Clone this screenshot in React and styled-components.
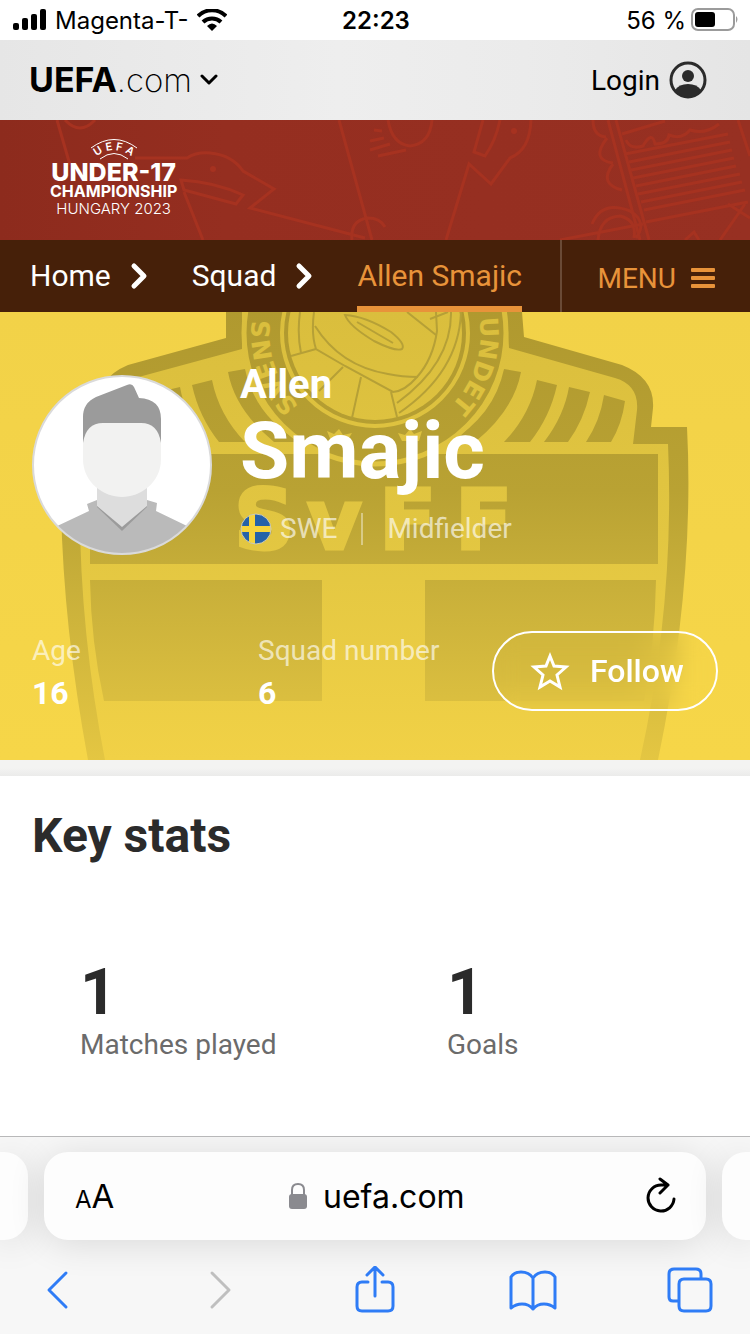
import React from "react";
import styled, { createGlobalStyle } from 'styled-components';

const GlobalStyle = createGlobalStyle`
  * {
    box-sizing: border-box;
  }

  body {
    margin: 0;
    background: #fff;
    font-family: Roboto, "Liberation Sans", sans-serif;
  }

  button {
    padding: 0;
    border: none;
    background: none;
    color: inherit;
    font: inherit;
    cursor: pointer;
  }

  svg {
    display: block;
    flex-shrink: 0;
  }
`;

const Screen = styled.div`
  display: flex;
  flex-direction: column;
  min-height: 100vh;
`;

const StatusBar = styled.div`
  display: grid;
  grid-template-columns: 1fr auto 1fr;
  align-items: center;
  height: 40px;
  padding: 0 11px 0 13px;
  font-family: Inter, sans-serif;
  font-size: 24px;
  line-height: 28px;
  color: #000;
`;

const StatusGroup = styled.div`
  display: flex;
  align-items: center;
  justify-content: ${(props) => props.$end ? "flex-end" : "flex-start"};
  gap: ${(props) => props.$end ? "5px" : "8px"};
`;

const StatusText = styled.span`
  padding-top: 2px;
`;

const Clock = styled.time`
  padding-top: 2px;
  font-weight: 600;
`;

const SiteHeader = styled.header`
  display: flex;
  align-items: center;
  justify-content: space-between;
  height: 80px;
  padding: 0 43px 0 29px;
  background: linear-gradient(90deg, #e6e6e6, #eeeeee 45%, #ebebeb 70%, #e5e5e5);
`;

const SiteButton = styled.button`
  display: flex;
  align-items: center;
  gap: 8px;
  font-family: Inter, sans-serif;
  font-size: 33px;
  line-height: 40px;
  font-weight: 200;
  color: #000;
`;

const SiteName = styled.span`
  b {
    font-size: 34px;
    font-weight: 700;
  }
`;

const LoginButton = styled.button`
  display: flex;
  align-items: center;
  gap: 9px;
  font-size: 28px;
  line-height: 32px;
  color: #000;
`;

const LoginText = styled.span`
  padding-top: 2px;
`;

const Banner = styled.div`
  display: grid;
  height: 120px;
  overflow: hidden;
  background: linear-gradient(90deg, #8d2b1d, #952e20 30%, #973022);
`;

const BannerPattern = styled.svg`
  grid-area: 1 / 1;
  width: 100%;
  height: 120px;
`;

const TournamentLogo = styled.a`
  grid-area: 1 / 1;
  justify-self: start;
  align-self: center;
  display: flex;
  flex-direction: column;
  align-items: center;
  margin-left: 50px;
  padding-bottom: 2px;
  font-family: Inter, sans-serif;
  color: #fff;
  text-decoration: none;
`;

const LogoTitle = styled.span`
  font-size: 25px;
  line-height: 21px;
  font-weight: 800;
`;

const LogoSubtitle = styled.span`
  font-size: 16px;
  line-height: 16px;
  font-weight: 700;
`;

const LogoPlace = styled.span`
  font-size: 15px;
  line-height: 20px;
  font-weight: 300;
`;

const Nav = styled.nav`
  display: flex;
  height: 72px;
  background: #462009;
`;

const Crumbs = styled.div`
  display: flex;
  flex: 1;
  padding-left: 30px;
`;

const Crumb = styled.a`
  display: flex;
  align-items: center;
  height: 72px;
  border-bottom: 6px solid ${(props) => props.$active ? "#e8933a" : "transparent"};
  padding-top: 6px;
  font-size: 30px;
  line-height: 36px;
  color: ${(props) => props.$active ? "#e8933a" : "#fff"};
  text-decoration: none;
`;

const CrumbArrow = styled.svg`
  align-self: center;
  margin: 0 44px 0 19px;
`;

const MenuButton = styled.button`
  display: flex;
  align-items: center;
  gap: 15px;
  padding: 4px 35px 0 36px;
  border-left: 2px solid #6a4a36;
  font-size: 28px;
  line-height: 32px;
  color: #e8933a;
`;

const MenuText = styled.span`
  padding-top: 2px;
`;

const Hero = styled.section`
  display: grid;
  overflow: hidden;
  background: linear-gradient(180deg, #f2d248, #f6d648);
  color: #fff;
`;

const Crest = styled.svg`
  grid-area: 1 / 1;
  width: 100%;
  height: 448px;
`;

const HeroContent = styled.div`
  grid-area: 1 / 1;
  padding: 49px 32px;
  z-index: 1;
`;

const Profile = styled.div`
  display: flex;
  gap: 28px;
`;

const Avatar = styled.div`
  width: 180px;
  height: 180px;
  margin-top: 14px;
`;

const PlayerName = styled.h1`
  display: flex;
  flex-direction: column;
  margin: 0;
  font-size: 80px;
  line-height: 84px;
  font-weight: 700;
`;

const FirstName = styled.span`
  font-size: 40px;
  line-height: 48px;
`;

const PlayerMeta = styled.div`
  display: flex;
  align-items: center;
  margin-top: 20px;
  font-size: 28px;
  line-height: 32px;
`;

const MetaText = styled.span`
  padding-left: ${(props) => props.$role ? "24px" : "8px"};
  margin-left: ${(props) => props.$role ? "24px" : "0"};
  border-left: ${(props) => props.$role ? "2px solid rgba(255, 255, 255, 0.4)" : "none"};
  color: rgba(255, 255, 255, 0.65);
`;

const HeroFooter = styled.div`
  display: flex;
  align-items: center;
  margin: 76px 0 -1px 0;
`;

const Details = styled.dl`
  display: flex;
  flex: 1;
  margin: 0;
  padding-top: 2px;
`;

const Detail = styled.div`
  flex: 1;
  white-space: nowrap;

  dt {
    font-size: 28px;
    line-height: 32px;
    color: rgba(255, 255, 255, 0.65);
  }

  dd {
    margin: 10px 0 0 0;
    font-size: 32px;
    line-height: 32px;
    font-weight: 700;
  }
`;

const FollowButton = styled.button`
  display: flex;
  align-items: center;
  gap: 20px;
  width: 226px;
  height: 80px;
  margin-left: 8px;
  padding-left: 36px;
  border: 2px solid #fff;
  border-radius: 40px;
  backdrop-filter: blur(12px);
  font-size: 32px;
  line-height: 40px;
  font-weight: 500;
`;

const Divider = styled.div`
  height: 16px;
  background: linear-gradient(180deg, #f3f3f2 50%, #ebebea);
`;

const StatsSection = styled.section`
  flex: 1;
  padding-top: 32px;
  color: #2b2b2b;
`;

const SectionTitle = styled.h2`
  margin: 0 32px;
  font-size: 48px;
  line-height: 56px;
  font-weight: 700;
`;

const StatsGrid = styled.div`
  display: grid;
  grid-template-columns: 1fr 1fr;
  margin: 97px 0 0 16px;
`;

const Stat = styled.div`
  display: flex;
  flex-direction: column;
  gap: 4px;
  padding-left: 64px;
`;

const StatValue = styled.strong`
  font-size: 64px;
  line-height: 64px;
  font-weight: 700;
`;

const StatLabel = styled.span`
  font-size: 28px;
  line-height: 32px;
  color: #6b6b6b;
`;

const BrowserBar = styled.footer`
  overflow: hidden;
  border-top: 1px solid #b8b8b9;
  padding-top: 15px;
  background: #f7f7f7;
`;

const Tabs = styled.div`
  display: flex;
  gap: 16px;
`;

const TabEdge = styled.div`
  width: 28px;
  height: 88px;
  border-radius: ${(props) => props.$right ? "24px 0 0 24px" : "0 24px 24px 0"};
  background: #fdfdfd;
  box-shadow: 0 4px 36px rgba(0, 0, 0, 0.12);
`;

const AddressBar = styled.div`
  display: grid;
  grid-template-columns: 1fr auto 1fr;
  align-items: center;
  flex: 1;
  height: 88px;
  padding: 0 29px 0 31px;
  border-radius: 24px;
  background: #fdfdfd;
  box-shadow: 0 4px 36px rgba(0, 0, 0, 0.12);
  font-family: Inter, sans-serif;
  color: #000;
`;

const TextSizeButton = styled.button`
  justify-self: start;
  padding-top: 4px;
  font-size: 33px;
  line-height: 40px;

  small {
    font-size: 24px;
  }
`;

const Address = styled.label`
  display: flex;
  align-items: center;
  gap: 15px;
`;

const AddressInput = styled.input`
  width: 141px;
  padding: 2px 0 0 0;
  border: none;
  outline: none;
  background: none;
  color: #000;
  font-family: Inter, sans-serif;
  font-size: 32px;
  line-height: 40px;
`;

const ReloadButton = styled.button`
  justify-self: end;
`;

const Toolbar = styled.div`
  display: flex;
  justify-content: space-between;
  padding: 26px 35px 20px 35px;
`;

const ToolButton = styled.button`
  color: ${(props) => props.disabled ? "#bfbfbf" : "#2f7cf6"};

  svg {
    fill: none;
    stroke: currentColor;
    stroke-width: 3;
    stroke-linecap: round;
    stroke-linejoin: round;
  }
`;

const stats = [
  { value: "1", label: "Matches played" },
  { value: "1", label: "Goals" }
];

const tools = [
  { name: "Back", d: "M31 7 L14 24 L31 41" },
  { name: "Forward", d: "M19 7 L36 24 L19 41", disabled: true },
  { name: "Share", d: "M17 16 H11 Q6 16 6 21 V40 Q6 45 11 45 H37 Q42 45 42 40 V21 Q42 16 37 16 H31 M24 30 V2 M16 9 L24 1 L32 9" },
  { name: "Bookmarks", d: "M24 12 Q20 6 12 6 Q5 6 2 11 V42 Q7 38 13 38 Q20 38 24 43 Q28 38 35 38 Q41 38 46 42 V11 Q43 6 36 6 Q28 6 24 12 V43" },
  { name: "Tabs", d: "M11 35 H6 Q2 35 2 31 V8 Q2 3 7 3 H29 Q34 3 34 8 V13 M17 13 H39 Q44 13 44 18 V40 Q44 45 39 45 H17 Q12 45 12 40 V18 Q12 13 17 13 Z" }
];

const SignalIcon = () => (
  <svg width="34" height="22" viewBox="0 0 34 22">
    <rect x="0" y="14" width="6" height="7" rx="2" />
    <rect x="9" y="9" width="6" height="12" rx="2" />
    <rect x="18" y="5" width="6" height="16" rx="2" />
    <rect x="27" y="0" width="6" height="21" rx="2" />
  </svg>
);

const WifiIcon = () => (
  <svg width="30" height="22" viewBox="0 0 30 22">
    <path d="M1 7 A20 20 0 0 1 29 7" fill="none" stroke="#000" strokeWidth="4" />
    <path d="M6 13 A13 13 0 0 1 24 13" fill="none" stroke="#000" strokeWidth="4" />
    <path d="M15 22 L10 17 Q15 12 20 17 Z" />
  </svg>
);

const BatteryIcon = () => (
  <svg width="48" height="24" viewBox="0 0 48 24">
    <rect x="1" y="1" width="42" height="21" rx="6" fill="#fff" stroke="#9b9b9b" strokeWidth="2" />
    <rect x="4" y="4" width="20" height="15" rx="3" />
    <path d="M45 8 Q48 11 45 15 Z" fill="#9b9b9b" />
  </svg>
);

const UserIcon = () => (
  <svg width="38" height="38" viewBox="0 0 38 38">
    <circle cx="19" cy="19" r="17" fill="none" stroke="#2b2b2b" strokeWidth="3" />
    <circle cx="19" cy="15" r="6" fill="#2b2b2b" />
    <path d="M6 29 Q10 23 19 23 Q28 23 32 29 Q27 36 19 36 Q11 36 6 29 Z" fill="#2b2b2b" />
  </svg>
);

const LogoArc = () => (
  <svg width="48" height="23" viewBox="0 0 48 23">
    <defs>
      <path id="logoArc" d="M4 20 A27 27 0 0 1 44 20" />
    </defs>
    <path d="M1 9 Q24 -8 47 9" fill="none" stroke="#fff" strokeWidth="1" />
    <path d="M10 20 Q24 9 38 20" fill="none" stroke="#fff" strokeWidth="1" />
    <text fill="#fff" fontSize="11" fontWeight="600" textAnchor="middle">
      <textPath href="#logoArc" startOffset="50%">U E F A</textPath>
    </text>
  </svg>
);

const AvatarPicture = () => (
  <svg width="180" height="180" viewBox="0 0 180 180" role="img" aria-label="Allen Smajic">
    <defs>
      <clipPath id="avatarClip"><circle cx="90" cy="90" r="89" /></clipPath>
    </defs>
    <circle cx="90" cy="90" r="89" fill="#fff" />
    <g clipPath="url(#avatarClip)">
      <path d="M0 163 L57 136 L55 129 L65 125 H115 L125 128 L124 136 L180 163 V180 H0 Z" fill="#bababa" />
      <path d="M65 112 V132 L90 156 L115 132 V112 Z" fill="#9b9b9b" />
      <path d="M65 105 V131 L90 152 L115 131 V105 Z" fill="#dddddd" />
      <path d="M51 70 V42 Q51 28 64 22 L95 10 Q100 8 102 12 L107 23 Q129 24 129 44 V70 Z" fill="#9b9b9b" />
      <path d="M51 68 Q54 48 71 48 H109 Q126 48 129 68 V84 C129 108 108 122 90 122 C72 122 51 108 51 84 Z" fill="#f2f2f1" />
    </g>
    <circle cx="90" cy="90" r="89" fill="none" stroke="#dadada" strokeWidth="2" />
  </svg>
);

const FlagIcon = () => (
  <svg width="32" height="32" viewBox="0 0 32 32" role="img" aria-label="Sweden">
    <defs>
      <clipPath id="flagClip"><circle cx="16" cy="16" r="15" /></clipPath>
    </defs>
    <g clipPath="url(#flagClip)">
      <rect width="32" height="32" fill="#2562a8" />
      <path d="M12 0 V32 M0 16 H32" stroke="#f6d43c" strokeWidth="6" />
    </g>
    <circle cx="16" cy="16" r="15" fill="none" stroke="#cfcdb4" strokeWidth="1" />
  </svg>
);

const CrestBars = () => (
  <g fill="url(#crestDark)">
    <path d="M504 57 L521 60 Q514 98 475 130 H449 Q494 104 504 57 Z" />
    <path d="M537 68 L557 73 Q550 105 530 130 H504 Q530 103 537 68 Z" />
    <path d="M569 75 L590 80 Q584 108 568 130 H544 Q564 104 569 75 Z" />
    <path d="M604 83 L625 89 Q622 112 611 130 H586 Q600 109 604 83 Z" />
  </g>
);

// Federation badge behind the player's details
const CrestPicture = () => (
  <Crest viewBox="0 0 750 448" preserveAspectRatio="xMidYMid slice" aria-hidden="true">
    <defs>
      <linearGradient id="crestDark" gradientUnits="userSpaceOnUse" x1="0" y1="0" x2="0" y2="448">
        <stop offset="0" stopColor="#b0992f" />
        <stop offset="0.4" stopColor="#b9a233" />
        <stop offset="0.62" stopColor="#c9b03a" />
        <stop offset="1" stopColor="#e4c642" />
      </linearGradient>
      <linearGradient id="crestLight" gradientUnits="userSpaceOnUse" x1="0" y1="0" x2="0" y2="448">
        <stop offset="0" stopColor="#dabe3d" />
        <stop offset="0.5" stopColor="#e2c641" />
        <stop offset="1" stopColor="#f1d146" />
      </linearGradient>
      <path id="ringLeft" d="M299 94 A105 105 0 0 1 375 -84" />
      <path id="ringRight" d="M375 -84 A105 105 0 0 1 451 94" />
    </defs>
    <path d="M226 0 H522 L524 25 L622 53 Q655 66 653 96 L651 115 H687 Q695 270 658 448 H88 Q55 270 62 115 H98 L97 96 Q97 66 128 53 L226 26 Z" fill="url(#crestDark)" />
    <path d="M242 0 H507 L509 36 L615 66 Q639 73 637 98 L633 132 H668 Q675 290 640 448 H105 Q74 290 81 132 H117 L113 98 Q111 73 135 66 L242 37 Z" fill="url(#crestLight)" />
    <CrestBars />
    <g transform="translate(749 0) scale(-1 1)"><CrestBars /></g>
    <path d="M90 142 H658 V252 H90 Z M90 268 H322 V389 H104 Q91 330 90 268 Z M425 268 H656 Q655 330 644 389 H425 Z" fill="url(#crestDark)" />
    <circle cx="375" cy="21" r="131" fill="url(#crestDark)" stroke="url(#crestLight)" strokeWidth="5" />
    <circle cx="375" cy="21" r="93" fill="none" stroke="url(#crestLight)" strokeWidth="4" />
    <circle cx="375" cy="21" r="87" fill="url(#crestLight)" />
    <g fill="none" stroke="#b6a036" strokeWidth="2">
      <path d="M314 0 Q311 22 316 37 L345 54 L393 80 Q405 79 417 65 Q433 47 437 19 L436 0" />
      <path d="M315 14 Q340 54 388 62 Q402 65 418 65" />
      <path d="M300 0 Q297 22 301 41 M291 44 L316 37 M343 55 L319 79 M361 65 L352 106 M391 80 L397 105" />
      <path d="M451 0 Q452 51 397 91 M461 0 Q459 60 399 101 M407 0 L436 23 M430 7 L448 0" />
      <path d="M345 3 Q365 4 391 20 Q406 32 402 37 Q396 40 374 29 Q349 14 345 3 Z M357 10 L393 31" />
    </g>
    <g fill="url(#crestLight)" fontFamily="'DejaVu Sans', sans-serif" fontWeight="700">
      <text fontSize="25"><textPath href="#ringLeft">SVENS</textPath></text>
      <text fontSize="25" textAnchor="end"><textPath href="#ringRight" startOffset="100%">UNDET</textPath></text>
      <text x="234 307 379 455" y="237" fontSize="84" stroke="url(#crestLight)" strokeWidth="3">SvFF</text>
    </g>
    <path d="M327 119 L334 122 L339 117 L343 123 L352 121 L347 129 H331 Z M398 121 L405 123 L410 117 L414 122 L422 119 L419 129 H402 Z" fill="url(#crestLight)" />
  </Crest>
);

const PatternPicture = () => (
  <BannerPattern viewBox="0 0 750 120" preserveAspectRatio="xMidYMid slice" aria-hidden="true">
    <g fill="none" stroke="#a63220" strokeWidth="3">
      <path d="M57 0 L70 45 M65 0 Q80 16 95 0" />
      <path d="M135 38 H187 Q196 32 210 33 Q232 35 243 51 L274 69 L250 88 L365 118 M181 60 Q215 62 243 75 L236 84 L184 70 Z M184 72 L203 120" />
      <path d="M339 0 L372 120 M352 120 Q350 100 368 98 Q380 98 385 107" />
      <path d="M388 0 Q392 24 410 26 Q430 24 432 0 M374 10 L382 11 M370 21 L384 18 M370 30 L390 24 M378 36 L406 30" />
      <path d="M446 120 L469 44 L491 64 L510 38 Q530 30 531 0 M483 0 L474 32 L485 36 Q496 20 500 0" />
      <path d="M593 0 Q593 16 606 17 M607 18 Q590 40 613 43 M613 44 Q598 64 622 70" />
      <path d="M608 0 L640 120 M616 0 L649 120 M622 14 L665 1 M626 20 Q630 30 643 26 Q652 10 655 24 Q668 24 669 15 Q682 20 690 10 Q705 15 719 4" />
      <path d="M625 34 L728 14 M629 42 L730 22 M631 50 L732 30 M633 58 L734 38 M636 66 L736 46 M638 74 L740 54 M641 82 L742 62 M644 90 L745 70 M646 102 L748 82" />
      <path d="M592 104 Q602 80 630 91 Q648 102 636 118 M598 120 Q600 97 620 96 Q637 100 634 118 M560 120 L643 104 M738 0 L750 36 M720 120 L745 84 M685 120 L694 112 L699 120 M728 84 L750 98" />
    </g>
    <circle cx="213" cy="49" r="3" fill="#a63220" />
    <circle cx="514" cy="11" r="3" fill="#a63220" />
  </BannerPattern>
);

const Arrow = () => (
  <CrumbArrow width="18" height="28" viewBox="0 0 18 28" fill="none" stroke="#fff" strokeWidth="5" strokeLinecap="round" strokeLinejoin="round">
    <path d="M4 4 L14 14 L4 24" />
  </CrumbArrow>
);

class App extends React.Component{

  state = {
    address: "uefa.com",
    following: false
  };

  onChangeAddress = (event) => {
    this.setState({address: event.target.value});
  };

  toggleFollow = () => {
    this.setState({following: !this.state.following});
  };

  render() {

    const statList = stats.map((stat) => {
      return (
        <Stat key={stat.label}>
          <StatValue>{stat.value}</StatValue>
          <StatLabel>{stat.label}</StatLabel>
        </Stat>
      );
    });

    const toolList = tools.map((tool) => {
      return (
        <ToolButton key={tool.name} type="button" aria-label={tool.name} disabled={tool.disabled}>
          <svg width="48" height="48" viewBox="0 0 48 48"><path d={tool.d} /></svg>
        </ToolButton>
      );
    });

    return (
      <Screen>
        <GlobalStyle />
        <StatusBar>
          <StatusGroup>
            <SignalIcon />
            <StatusText>Magenta-T-</StatusText>
            <WifiIcon />
          </StatusGroup>
          <Clock>22:23</Clock>
          <StatusGroup $end>
            <StatusText>56 %</StatusText>
            <BatteryIcon />
          </StatusGroup>
        </StatusBar>
        <SiteHeader>
          <SiteButton type="button">
            <SiteName><b>UEFA</b>.com</SiteName>
            <svg width="18" height="12" viewBox="0 0 18 12" fill="none" stroke="#000" strokeWidth="3" strokeLinecap="round" strokeLinejoin="round">
              <path d="M2 2 L9 9 L16 2" />
            </svg>
          </SiteButton>
          <LoginButton type="button">
            <LoginText>Login</LoginText>
            <UserIcon />
          </LoginButton>
        </SiteHeader>
        <Banner>
          <PatternPicture />
          <TournamentLogo href="#tournament">
            <LogoArc />
            <LogoTitle>UNDER-17</LogoTitle>
            <LogoSubtitle>CHAMPIONSHIP</LogoSubtitle>
            <LogoPlace>HUNGARY 2023</LogoPlace>
          </TournamentLogo>
        </Banner>
        <Nav>
          <Crumbs>
            <Crumb href="#home">Home</Crumb>
            <Arrow />
            <Crumb href="#squad">Squad</Crumb>
            <Arrow />
            <Crumb href="#player" $active>Allen Smajic</Crumb>
          </Crumbs>
          <MenuButton type="button">
            <MenuText>MENU</MenuText>
            <svg width="24" height="20" viewBox="0 0 24 20" fill="#e8933a">
              <rect width="24" height="4" rx="1" />
              <rect y="8" width="24" height="4" rx="1" />
              <rect y="16" width="24" height="4" rx="1" />
            </svg>
          </MenuButton>
        </Nav>
        <Hero>
          <CrestPicture />
          <HeroContent>
            <Profile>
              <Avatar><AvatarPicture /></Avatar>
              <div>
                <PlayerName>
                  <FirstName>Allen</FirstName>
                  Smajic
                </PlayerName>
                <PlayerMeta>
                  <FlagIcon />
                  <MetaText>SWE</MetaText>
                  <MetaText $role>Midfielder</MetaText>
                </PlayerMeta>
              </div>
            </Profile>
            <HeroFooter>
              <Details>
                <Detail>
                  <dt>Age</dt>
                  <dd>16</dd>
                </Detail>
                <Detail>
                  <dt>Squad number</dt>
                  <dd>6</dd>
                </Detail>
              </Details>
              <FollowButton type="button" aria-pressed={this.state.following} onClick={this.toggleFollow}>
                <svg width="40" height="40" viewBox="0 0 40 40" fill="none" stroke="#fff" strokeWidth="3">
                  <path d="M20 5 L24 15 L36 16 L27 24 L30 36 L20 30 L10 36 L13 24 L4 16 L16 15 Z" />
                </svg>
                Follow
              </FollowButton>
            </HeroFooter>
          </HeroContent>
        </Hero>
        <Divider />
        <StatsSection>
          <SectionTitle>Key stats</SectionTitle>
          <StatsGrid>{statList}</StatsGrid>
        </StatsSection>
        <BrowserBar>
          <Tabs>
            <TabEdge />
            <AddressBar>
              <TextSizeButton type="button"><small>A</small>A</TextSizeButton>
              <Address>
                <svg width="20" height="28" viewBox="0 0 20 28">
                  <path d="M4 13 V8 Q4 2 10 2 Q16 2 16 8 V13" fill="none" stroke="#8a8a8f" strokeWidth="2" />
                  <rect x="1" y="12" width="18" height="15" rx="3" fill="#8a8a8f" />
                </svg>
                <AddressInput aria-label="Address" type="text" value={this.state.address} onChange={this.onChangeAddress} />
              </Address>
              <ReloadButton type="button" aria-label="Reload">
                <svg width="32" height="38" viewBox="0 0 32 38" fill="none" stroke="#000" strokeWidth="3" strokeLinecap="round" strokeLinejoin="round">
                  <path d="M29 22 A13 13 0 1 1 16 8 H23 M15 2 L23 8 L15 16" />
                </svg>
              </ReloadButton>
            </AddressBar>
            <TabEdge $right />
          </Tabs>
          <Toolbar>{toolList}</Toolbar>
        </BrowserBar>
      </Screen>
    );
  };
};

export default App;
